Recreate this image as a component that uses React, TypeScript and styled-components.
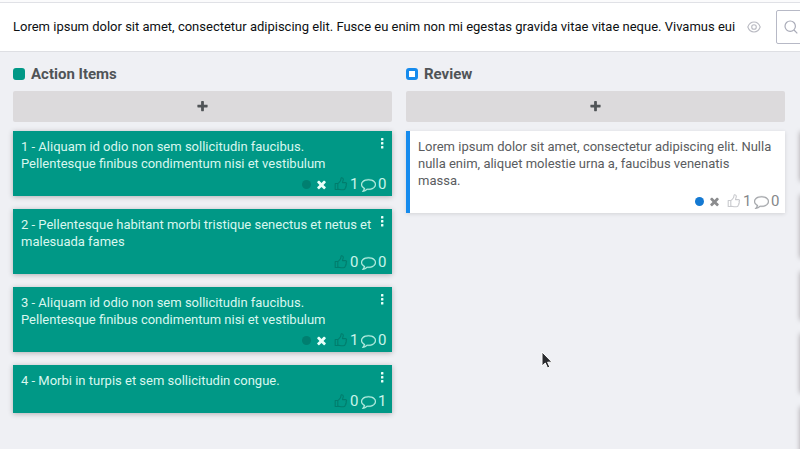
import React from "react";
import styled, { createGlobalStyle } from "styled-components";

const GlobalStyle = createGlobalStyle`
  *, *::before, *::after { box-sizing: border-box; }
  html, body, #root { height: 100%; }
  body {
    margin: 0;
    overflow: hidden;
    background: #eff0f4;
    color: #505457;
    font-family: Roboto, "Liberation Sans", sans-serif;
    font-size: 13px;
    line-height: 17px;
  }
  button, input { font: inherit; color: inherit; }
`;

const Page = styled.div`
  display: flex;
  flex-direction: column;
  height: 100%;
  overflow: hidden;
  border-top: 2px solid #fbfbfc;
`;

const Header = styled.header`
  display: flex;
  align-items: center;
  flex: none;
  height: 50px;
  padding-left: 13px;
  overflow: hidden;
  background: #fff;
  border-top: 1px solid #e0e1e6;
  border-bottom: 1px solid #dedfe3;
`;

const BoardTitle = styled.input`
  flex: 1;
  min-width: 0;
  height: 32px;
  padding: 0 0 2px;
  border: 0;
  background: transparent;
  color: #0d1012;
  outline: none;
`;

const IconButton = styled.button`
  display: flex;
  flex: none;
  align-items: center;
  justify-content: center;
  padding: 0;
  border: 0;
  background: transparent;
  cursor: pointer;
`;

const EyeButton = styled(IconButton)`
  width: 14px;
  height: 32px;
  margin: 0 15px 0 12px;
  color: #b9bac2;
`;

const SearchButton = styled(IconButton)`
  width: 34px;
  height: 34px;
  margin-right: -10px;
  padding-right: 4px;
  border: 1px solid #b7b9c6;
  border-radius: 2px;
  color: #a9abb8;
`;

const Board = styled.main`
  display: grid;
  flex: 1;
  grid-auto-flow: column;
  grid-auto-columns: calc(50% - 7px);
  align-content: start;
  gap: 14px;
  padding: 13px 15px 0 13px;
  overflow: hidden;
`;

const ColumnHeading = styled.h2`
  display: flex;
  align-items: center;
  gap: 6px;
  height: 18px;
  margin: 0 0 8px;
  font-size: 15px;
  font-weight: 700;
  line-height: 18px;
`;

const Marker = styled.span<{ $color: string; $hollow?: boolean }>`
  width: 12px;
  height: 12px;
  border: 3px solid ${(p) => p.$color};
  border-radius: 3px;
  background: ${(p) => (p.$hollow ? "#fff" : p.$color)};
`;

const AddButton = styled(IconButton)`
  width: 100%;
  height: 31px;
  margin-bottom: 9px;
  border-radius: 2px;
  background: #dcdadc;
  color: #505457;
`;

const CardList = styled.ul`
  display: flex;
  flex-direction: column;
  gap: 13px;
  margin: 0;
  padding: 0;
  list-style: none;
`;

const CardBox = styled.li<{ $filled: boolean; $accent: string }>`
  padding: 7px 6px 4px 8px;
  background: ${(p) => (p.$filled ? p.$accent : "#fff")};
  color: ${(p) => (p.$filled ? "#d9f7ef" : "#5a5c60")};
  box-shadow: 0 1px 5px rgba(40, 25, 30, 0.3);
  ${(p) => !p.$filled && `border-left: 4px solid ${p.$accent}; box-shadow: 0 1px 4px rgba(0, 0, 0, 0.12);`}
`;

const CardBody = styled.div`
  display: flex;
  align-items: flex-start;
`;

const CardText = styled.p<{ $inset: boolean }>`
  flex: 1;
  margin: 0;
  padding-right: ${(p) => (p.$inset ? 7 : 0)}px;
`;

const MenuButton = styled(IconButton)`
  width: 8px;
  height: 10px;
`;

const CardFooter = styled.footer`
  display: flex;
  align-items: center;
  justify-content: flex-end;
  height: 16px;
  margin-top: 4px;
`;

const Dot = styled.span<{ $color: string }>`
  width: 9px;
  height: 9px;
  margin-right: 4px;
  border-radius: 50%;
  background: ${(p) => p.$color};
`;

const RemoveButton = styled(IconButton)<{ $filled: boolean }>`
  margin-right: 6px;
  color: ${(p) => (p.$filled ? "#e9fff9" : "#8b8c8e")};
`;

const LikeButton = styled(IconButton)<{ $filled: boolean }>`
  color: ${(p) => (p.$filled ? "#007d6d" : "#c9cace")};
`;

const CommentButton = styled(IconButton)<{ $filled: boolean }>`
  margin-left: 3px;
  color: ${(p) => (p.$filled ? "#b9efe2" : "#a3a5a9")};
`;

const Count = styled.span<{ $filled: boolean }>`
  width: 8px;
  margin-left: 2px;
  color: ${(p) => (p.$filled ? "#c9f5ea" : "#85878a")};
  font-size: 15px;
  text-align: center;
`;

const Pointer = styled.svg`
  position: absolute;
  left: 540px;
  top: 350px;
  pointer-events: none;
`;

const PlusIcon = () => (
  <svg width="13" height="13" viewBox="0 0 1792 1792" fill="currentColor" aria-hidden="true">
    <path d="M1600 736v192q0 40-28 68t-68 28h-416v416q0 40-28 68t-68 28h-192q-40 0-68-28t-28-68v-416h-416q-40 0-68-28t-28-68v-192q0-40 28-68t68-28h416v-416q0-40 28-68t68-28h192q40 0 68 28t28 68v416h416q40 0 68 28t28 68z" />
  </svg>
);

const TimesIcon = () => (
  <svg width="13" height="13" viewBox="0 0 1792 1792" fill="currentColor" aria-hidden="true">
    <path d="M1490 1322q0 40-28 68l-136 136q-28 28-68 28t-68-28l-294-294-294 294q-28 28-68 28t-68-28l-136-136q-28-28-28-68t28-68l294-294-294-294q-28-28-28-68t28-68l136-136q28-28 68-28t68 28l294 294 294-294q28-28 68-28t68 28l136 136q28 28 28 68t-28 68l-294 294 294 294q28 28 28 68z" />
  </svg>
);

const ThumbIcon = () => (
  <svg width="14" height="14" viewBox="0 0 14 14" fill="none" stroke="currentColor" strokeWidth="1.1" strokeLinejoin="round" aria-hidden="true">
    <path d="M1.200 6.500h2.600v6H1.200zM3.800 6.600C4.900 6.200 5.500 5 6.300 4c.7-.9.400-2.700 1.100-3.200.9-.3 1.900.4 1.900 1.700 0 1.300-.8 1.900-.8 3.100h2.700c1.500 0 1.700 1.500.8 2.200.5.7.3 1.500-.3 1.900.3.7 0 1.300-.5 1.600 0 1-.6 1.500-1.700 1.500H7.900c-1.400 0-2.700-.7-4.100-.7" />
  </svg>
);

const CommentIcon = () => (
  <svg width="15" height="15" viewBox="0 0 1792 1792" fill="currentColor" stroke="currentColor" strokeWidth="30" aria-hidden="true">
    <path d="M896 384q-204 0-381.5 69.5t-282 187.5-104.5 255q0 112 71.5 213.5t201.5 175.5l87 50-27 96q-24 91-70 172 152-63 275-171l43-38 57 6q69 8 130 8 204 0 381.5-69.5t282-187.5 104.5-255-104.5-255-282-187.5-381.5-69.5zm896 512q0 174-120 321.5t-326 233-450 85.5q-70 0-145-8-198 175-460 242-49 14-114 22h-5q-15 0-27-10.5t-16-27.5v-1q-3-4-.5-12t2-10 4.5-9.5l6-9 7-8.5 8-9q7-8 31-34.5t34.5-38 31-39.5 32.5-51 27-59 26-76q-157-89-247.5-220t-90.5-281q0-174 120-321.5t326-233 450-85.5 450 85.5 326 233 120 321.5z" />
  </svg>
);

const MenuIcon = () => (
  <svg width="4" height="12" viewBox="0 0 4 12" fill="#e9fff9" aria-hidden="true">
    <rect x="1" y="1" width="2.4" height="2.4" rx=".5" />
    <rect x="1" y="5" width="2.4" height="2.4" rx=".5" />
    <rect x="1" y="9" width="2.4" height="2.4" rx=".5" />
  </svg>
);

const EyeIcon = () => (
  <svg width="14" height="12" viewBox="0 0 14 12" fill="none" stroke="currentColor" strokeWidth="1.1" aria-hidden="true">
    <path d="M.8 6C2 2.8 4.2 1 7 1s5 1.800 6.200 5C12 9.200 9.800 11 7 11S2 9.200.8 6Z" />
    <circle cx="7" cy="6" r="2.300" />
  </svg>
);

const SearchIcon = () => (
  <svg width="14" height="14" viewBox="0 0 14 14" fill="none" stroke="currentColor" strokeWidth="1.200" aria-hidden="true">
    <circle cx="6.200" cy="6.200" r="5.200" />
    <path d="m10 10 3.300 3.300" />
  </svg>
);

type CardData = {
  text: string;
  likes: number;
  comments: number;
  voted?: boolean;
};

type ColumnData = {
  title: string;
  color: string;
  filled: boolean;
  dot: string;
  cards: CardData[];
};

const columns: ColumnData[] = [
  {
    title: "Action Items",
    color: "#009886",
    filled: true,
    dot: "#007f70",
    cards: [
      { text: "1 - Aliquam id odio non sem sollicitudin faucibus. Pellentesque finibus condimentum nisi et vestibulum", likes: 1, comments: 0, voted: true },
      { text: "2 - Pellentesque habitant morbi tristique senectus et netus et malesuada fames", likes: 0, comments: 0 },
      { text: "3 - Aliquam id odio non sem sollicitudin faucibus. Pellentesque finibus condimentum nisi et vestibulum", likes: 1, comments: 0, voted: true },
      { text: "4 - Morbi in turpis et sem sollicitudin congue.", likes: 0, comments: 1 },
    ],
  },
  {
    title: "Review",
    color: "#168bed",
    filled: false,
    dot: "#1479d2",
    cards: [
      {
        text: "Lorem ipsum dolor sit amet, consectetur adipiscing elit. Nulla nulla enim, aliquet molestie urna a, faucibus venenatis massa.",
        likes: 1,
        comments: 0,
        voted: true,
      },
    ],
  },
];

const NextColumn = styled.div`
  display: flex;
  flex-direction: column;
  gap: 14px;
  margin-left: 1px;
  padding-top: 66px;
`;

const NextCard = styled.div<{ $height: number }>`
  height: ${(p) => p.$height}px;
  background: #dcdadc;
  box-shadow: 0 1px 5px rgba(40, 25, 30, 0.35);
`;

function Card({ card, column }: { card: CardData; column: ColumnData }) {
  const { filled } = column;
  return (
    <CardBox $filled={filled} $accent={column.color}>
      <CardBody>
        <CardText $inset={!filled}>{card.text}</CardText>
        {filled && (
          <MenuButton type="button" aria-label="Card menu">
            <MenuIcon />
          </MenuButton>
        )}
      </CardBody>
      <CardFooter>
        {card.voted && (
          <>
            <Dot $color={column.dot} />
            <RemoveButton type="button" $filled={filled} aria-label="Remove vote">
              <TimesIcon />
            </RemoveButton>
          </>
        )}
        <LikeButton type="button" $filled={filled} aria-label="Like">
          <ThumbIcon />
        </LikeButton>
        <Count $filled={filled}>{card.likes}</Count>
        <CommentButton type="button" $filled={filled} aria-label="Comments">
          <CommentIcon />
        </CommentButton>
        <Count $filled={filled}>{card.comments}</Count>
      </CardFooter>
    </CardBox>
  );
}

export default function App() {
  return (
    <Page>
      <GlobalStyle />
      <Header>
        <BoardTitle
          aria-label="Board title"
          defaultValue="Lorem ipsum dolor sit amet, consectetur adipiscing elit. Fusce eu enim non mi egestas gravida vitae vitae neque. Vivamus eui"
        />
        <EyeButton type="button" aria-label="Toggle visibility">
          <EyeIcon />
        </EyeButton>
        <SearchButton type="button" aria-label="Search">
          <SearchIcon />
        </SearchButton>
      </Header>
      <Board>
        {columns.map((column) => (
          <section key={column.title}>
            <ColumnHeading>
              <Marker $color={column.color} $hollow={!column.filled} />
              {column.title}
            </ColumnHeading>
            <AddButton type="button" aria-label={`Add to ${column.title}`}>
              <PlusIcon />
            </AddButton>
            <CardList>
              {column.cards.map((card) => (
                <Card key={card.text} card={card} column={column} />
              ))}
            </CardList>
          </section>
        ))}
        <NextColumn aria-hidden="true">
          <NextCard $height={49} />
          <NextCard $height={63} />
          <NextCard $height={48} />
          <NextCard $height={59} />
          <NextCard $height={64} />
        </NextColumn>
      </Board>
      <Pointer width="12" height="20" viewBox="0 0 12 20" aria-hidden="true">
        <path d="M2 2v14l3.300-3 2.200 5 2.300-1-2.200-4.800H12Z" fill="#292a2d" stroke="#fff" strokeWidth="1" />
      </Pointer>
    </Page>
  );
}
